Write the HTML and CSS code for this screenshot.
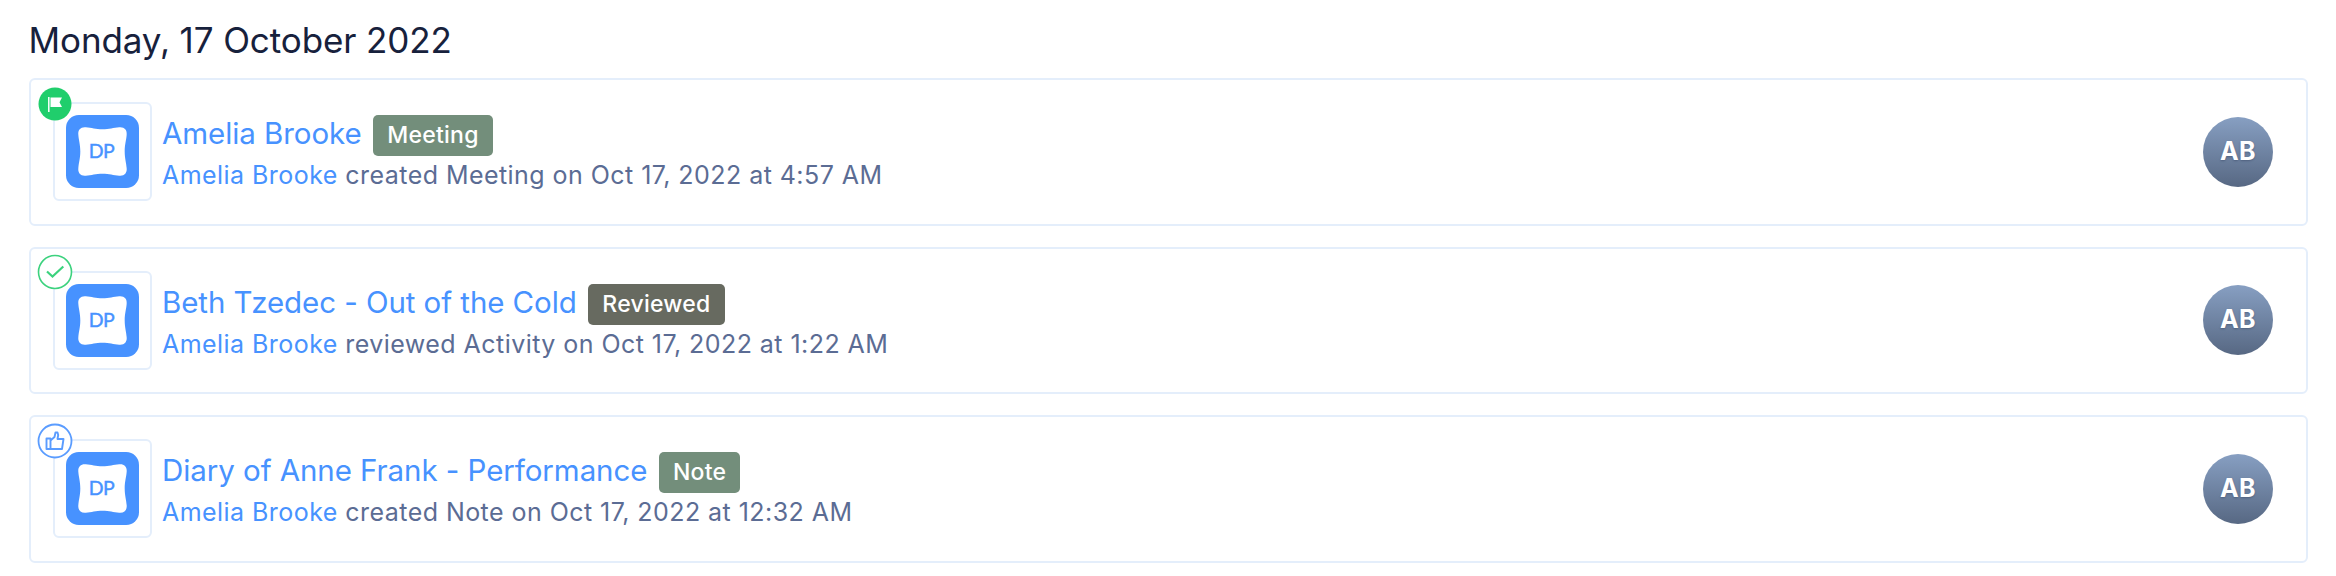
FILE: index.html
```html
<!DOCTYPE html>
<html lang="en">
  <head>
    <meta charset="UTF-8" />
    <meta name="viewport" content="width=device-width, initial-scale=1.0" />
    <title>Activity</title>
    <link rel="stylesheet" href="styles.css">
  </head>
  <body>
    <svg class="defs" width="0" height="0">
      <symbol id="logo" viewBox="0 0 74 74">
        <rect width="74" height="74" rx="13" fill="#4792ff" />
        <path fill="#fff" d="M20 12.500C26 13 30 14.500 37 14.500S48 13 54 12.500C59 12 62 15 61.500 20C61 26 59.500 30 59.500 37S61 48 61.500 54C62 59 59 62 54 61.500C48 61 44 59.500 37 59.500S26 61 20 61.500C15 62 12 59 12.500 54C13 48 14.500 44 14.500 37S13 26 12.500 20C12 15 15 12 20 12.500Z" />
      </symbol>
    </svg>
    <div class="timeline">
      <h2 class="date">Monday, 17 October 2022</h2>
      <div class="card">
        <div class="thumb">
          <svg class="logo"><use href="#logo" /></svg>
          <span class="logo-text">DP</span>
          <svg class="status" viewBox="0 0 36 36">
            <circle cx="18" cy="18" r="16.500" fill="#20ce6c" />
            <path d="M11.800 11v15" stroke="#fff" stroke-width="1.500" fill="none" />
            <path d="M13.500 11.500h11.500l-2.500 4.700 2.500 4.700h-11.500z" fill="#fff" />
          </svg>
        </div>
        <div class="info">
          <div class="title">
            <a>Amelia Brooke</a>
            <span class="tag meeting">Meeting</span>
          </div>
          <p><a>Amelia Brooke</a> created Meeting on Oct 17, 2022 at 4:57 AM</p>
        </div>
        <div class="avatar">AB</div>
      </div>
      <div class="card">
        <div class="thumb">
          <svg class="logo"><use href="#logo" /></svg>
          <span class="logo-text">DP</span>
          <svg class="status" viewBox="0 0 36 36">
            <circle cx="18" cy="18" r="16.500" fill="#fff" stroke="#3cd27e" stroke-width="1.600" />
            <path d="M10 17.500l5.500 5L26.300 12.500" stroke="#3cd27e" stroke-width="2.200" fill="none" />
          </svg>
        </div>
        <div class="info">
          <div class="title">
            <a>Beth Tzedec - Out of the Cold</a>
            <span class="tag reviewed">Reviewed</span>
          </div>
          <p><a>Amelia Brooke</a> reviewed Activity on Oct 17, 2022 at 1:22 AM</p>
        </div>
        <div class="avatar">AB</div>
      </div>
      <div class="card">
        <div class="thumb">
          <svg class="logo"><use href="#logo" /></svg>
          <span class="logo-text">DP</span>
          <svg class="status" viewBox="0 0 36 36">
            <circle cx="18" cy="18" r="16.500" fill="#fff" stroke="#5a9cff" stroke-width="1.800" />
            <path d="M9.500 15.500h4v10.500h-4zM13.500 17.500l4-3.500 1-4.500h2l.7 2.500-.7 4h6l-1.500 10H13.500" stroke="#5a9cff" stroke-width="1.900" stroke-linejoin="round" fill="none" />
          </svg>
        </div>
        <div class="info">
          <div class="title">
            <a>Diary of Anne Frank - Performance</a>
            <span class="tag note">Note</span>
          </div>
          <p><a>Amelia Brooke</a> created Note on Oct 17, 2022 at 12:32 AM</p>
        </div>
        <div class="avatar">AB</div>
      </div>
    </div>
  </body>
</html>
```
FILE: styles.css
```css
* {
  box-sizing: border-box;
}
body {
  margin: 0;
  background-color: #fff;
  font-family: Inter, "Liberation Sans", sans-serif;
  color: #5b6c94;
}
.defs {
  position: absolute;
}
.timeline {
  padding: 18px 28.5px 0 28.5px;
}
.date {
  margin: 0 0 16px;
  height: 44px;
  line-height: 44px;
  font-size: 35px;
  font-weight: 400;
  letter-spacing: -0.1px;
  color: #17213c;
}
.card {
  display: flex;
  align-items: flex-start;
  height: 147.5px;
  margin-bottom: 21px;
  padding: 22px 32.5px 0 22px;
  border: 2px solid #e4eefb;
  border-radius: 6px;
}
.thumb {
  position: relative;
  flex: none;
  width: 99px;
  height: 99px;
  padding: 11px;
  border: 2px solid #e4eefb;
  border-radius: 6px;
}
.logo {
  display: block;
  width: 73px;
  height: 73px;
}
.logo-text {
  position: absolute;
  top: 11px;
  left: 11px;
  width: 72px;
  font-family: Lato, sans-serif;
  font-size: 19.5px;
  letter-spacing: -0.5px;
  line-height: 72px;
  text-align: center;
  color: #4792ff;
  -webkit-text-stroke: 0.4px #4792ff;
}
.status {
  position: absolute;
  top: -18.5px;
  left: -18px;
  width: 36px;
  height: 36px;
}
.info {
  flex: 1;
  margin-left: 10.5px;
  padding-top: 13px;
}
.info a {
  color: #4792ff;
}
.title {
  display: flex;
  height: 41px;
  gap: 11.5px;
  font-size: 29.5px;
  letter-spacing: -0.07px;
  line-height: 37px;
  white-space: nowrap;
}
.tag {
  height: 41px;
  padding: 0 14px;
  border-radius: 5px;
  font-size: 23px;
  font-weight: 500;
  letter-spacing: 0.25px;
  line-height: 40px;
  color: #fff;
}
.meeting,
.note {
  background-color: #738e7b;
}
.reviewed {
  background-color: #676a60;
}
.info p {
  margin: 4px 0 0;
  font-size: 25px;
  letter-spacing: 0.45px;
  line-height: 30px;
}
.avatar {
  width: 70px;
  height: 70px;
  margin-top: 14.5px;
  border-radius: 50%;
  background: linear-gradient(#879fc2, #576883);
  color: #fff;
  font-size: 25px;
  font-weight: 700;
  letter-spacing: 0.3px;
  line-height: 69px;
  text-align: center;
  text-shadow: 0 1px 2px rgba(40, 55, 85, 0.4);
}
```
